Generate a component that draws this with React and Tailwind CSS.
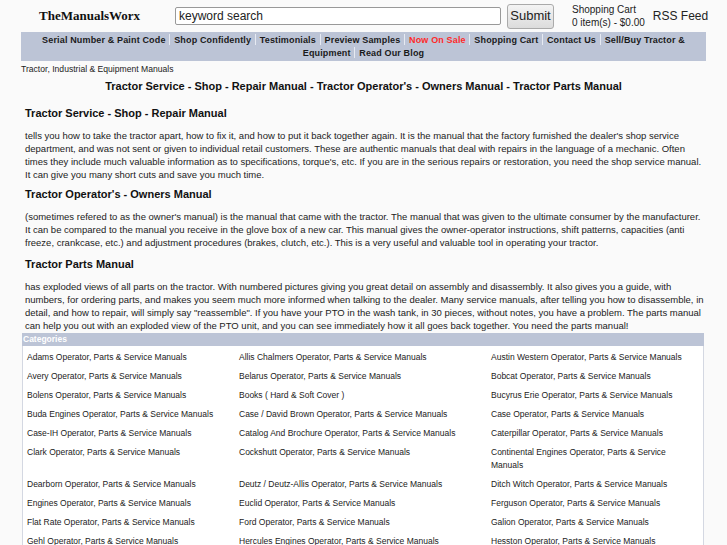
import React from "react";

const navLinks = [
  "Serial Number & Paint Code",
  "Shop Confidently",
  "Testimonials",
  "Preview Samples",
  "Now On Sale",
  "Shopping Cart",
  "Contact Us",
  "Sell/Buy Tractor & Equipment",
  "Read Our Blog",
];

const sections = [
  {
    title: "Tractor Service - Shop - Repair Manual",
    lines: [
      "tells you how to take the tractor apart, how to fix it, and how to put it back together again. It is the manual that the factory furnished the dealer's shop service",
      "department, and was not sent or given to individual retail customers. These are authentic manuals that deal with repairs in the language of a mechanic. Often",
      "times they include much valuable information as to specifications, torque's, etc. If you are in the serious repairs or restoration, you need the shop service manual.",
      "It can give you many short cuts and save you much time.",
    ],
  },
  {
    title: "Tractor Operator's - Owners Manual",
    lines: [
      "(sometimes refered to as the owner's manual) is the manual that came with the tractor. The manual that was given to the ultimate consumer by the manufacturer.",
      "It can be compared to the manual you receive in the glove box of a new car. This manual gives the owner-operator instructions, shift patterns, capacities (anti",
      "freeze, crankcase, etc.) and adjustment procedures (brakes, clutch, etc.). This is a very useful and valuable tool in operating your tractor.",
    ],
  },
  {
    title: "Tractor Parts Manual",
    lines: [
      "has exploded views of all parts on the tractor. With numbered pictures giving you great detail on assembly and disassembly. It also gives you a guide, with",
      "numbers, for ordering parts, and makes you seem much more informed when talking to the dealer. Many service manuals, after telling you how to disassemble, in",
      "detail, and how to repair, will simply say \"reassemble\". If you have your PTO in the wash tank, in 30 pieces, without notes, you have a problem. The parts manual",
      "can help you out with an exploded view of the PTO unit, and you can see immediately how it all goes back together. You need the parts manual!",
    ],
  },
];

const categories = [
  ["Adams Operator, Parts & Service Manuals", "Allis Chalmers Operator, Parts & Service Manuals", "Austin Western Operator, Parts & Service Manuals"],
  ["Avery Operator, Parts & Service Manuals", "Belarus Operator, Parts & Service Manuals", "Bobcat Operator, Parts & Service Manuals"],
  ["Bolens Operator, Parts & Service Manuals", "Books ( Hard & Soft Cover )", "Bucyrus Erie Operator, Parts & Service Manuals"],
  ["Buda Engines Operator, Parts & Service Manuals", "Case / David Brown Operator, Parts & Service Manuals", "Case Operator, Parts & Service Manuals"],
  ["Case-IH Operator, Parts & Service Manuals", "Catalog And Brochure Operator, Parts & Service Manuals", "Caterpillar Operator, Parts & Service Manuals"],
  ["Clark Operator, Parts & Service Manuals", "Cockshutt Operator, Parts & Service Manuals", "Continental Engines Operator, Parts & Service Manuals"],
  ["Dearborn Operator, Parts & Service Manuals", "Deutz / Deutz-Allis Operator, Parts & Service Manuals", "Ditch Witch Operator, Parts & Service Manuals"],
  ["Engines Operator, Parts & Service Manuals", "Euclid Operator, Parts & Service Manuals", "Ferguson Operator, Parts & Service Manuals"],
  ["Flat Rate Operator, Parts & Service Manuals", "Ford Operator, Parts & Service Manuals", "Galion Operator, Parts & Service Manuals"],
  ["Gehl Operator, Parts & Service Manuals", "Hercules Engines Operator, Parts & Service Manuals", "Hesston Operator, Parts & Service Manuals"],
];

export default function App() {
  return (
    <div className="min-h-[545px] w-[727px] overflow-hidden bg-[#fafafa] text-[#111] font-['Liberation_Sans',Arial,sans-serif]">
      {/* Top header */}
      <div className="flex h-[32px] items-center">
        <div className="w-[175px] pl-[39px] font-['Liberation_Serif','Times_New_Roman',serif] text-[13px] font-bold">
          TheManualsWorx
        </div>
        <div className="flex h-[18px] w-[326px] items-center rounded-[2px] border border-[#999] bg-white px-[3px] text-[12px] text-[#222]">
          keyword search
        </div>
        <button className="ml-[6px] h-[25px] w-[47px] rounded-[3px] border border-[#aaa] bg-gradient-to-b from-[#f4f4f4] to-[#dcdcdc] text-[13px] text-[#222]">
          Submit
        </button>
        <div className="ml-[18px] text-[10px] leading-[13px] text-[#222]">
          <div>Shopping Cart</div>
          <div>0 item(s) - $0.00</div>
        </div>
        <div className="ml-[8px] text-[12px] text-[#222]">RSS Feed</div>
      </div>

      {/* Nav bar */}
      <div className="mx-[21px] bg-[#bcc4d6] px-[15px] pt-[2px] pb-[1px] text-center text-[9px] font-bold leading-[13px] tracking-[0.15px] text-[#1a1a1a]">
        {navLinks.map((l, i) => (
          <React.Fragment key={l}>
            {i > 0 && <span className="mr-[4px] ml-[1px] inline-block h-[11px] w-px bg-[#e6eaf2] align-[-2px]" />}
            <span className={l === "Now On Sale" ? "text-[#ff2a2a]" : ""}>{l}</span>{" "}
          </React.Fragment>
        ))}
      </div>

      <div className="px-[21px] pt-[2px] text-[8.6px] leading-[12px] text-[#222]">
        Tractor, Industrial &amp; Equipment Manuals
      </div>

      <div className="mt-[4px] text-center text-[11px] font-bold leading-[14px]">
        Tractor Service - Shop - Repair Manual - Tractor Operator's - Owners Manual - Tractor Parts Manual
      </div>

      <div className="flex flex-col px-[25px] pt-[13px]">
        {sections.map((s, idx) => (
          <div key={s.title} className={`flex flex-col gap-[9px] ${idx === 1 ? "mt-[6px]" : idx === 2 ? "mt-[8px]" : ""}`}>
            <h2 className="text-[11px] font-bold leading-[14px]">{s.title}</h2>
            <p className="text-[9.5px] leading-[13px] text-[#222]">
              {s.lines.map((ln, i) => (
                <span key={i} className="block whitespace-nowrap">{ln}</span>
              ))}
            </p>
          </div>
        ))}
      </div>

      {/* Categories */}
      <div className="mx-[22px] mt-[1px] w-[682px]">
        <div className="h-[13px] bg-[#bcc4d6] px-[1px] text-[8.5px] font-bold leading-[13px] text-white">Categories</div>
        <div className="border border-t-0 border-[#d4d8e2] bg-white pt-[2px] pl-[4px]">
          {categories.map((row, i) => (
            <div key={i} className="grid grid-cols-[212px_252px_1fr] text-[8.5px] leading-[13px] text-[#222]">
              {row.map((c) => (
                <div key={c} className="py-[3px] pr-[14px]">{c}</div>
              ))}
            </div>
          ))}
        </div>
      </div>
    </div>
  );
}
